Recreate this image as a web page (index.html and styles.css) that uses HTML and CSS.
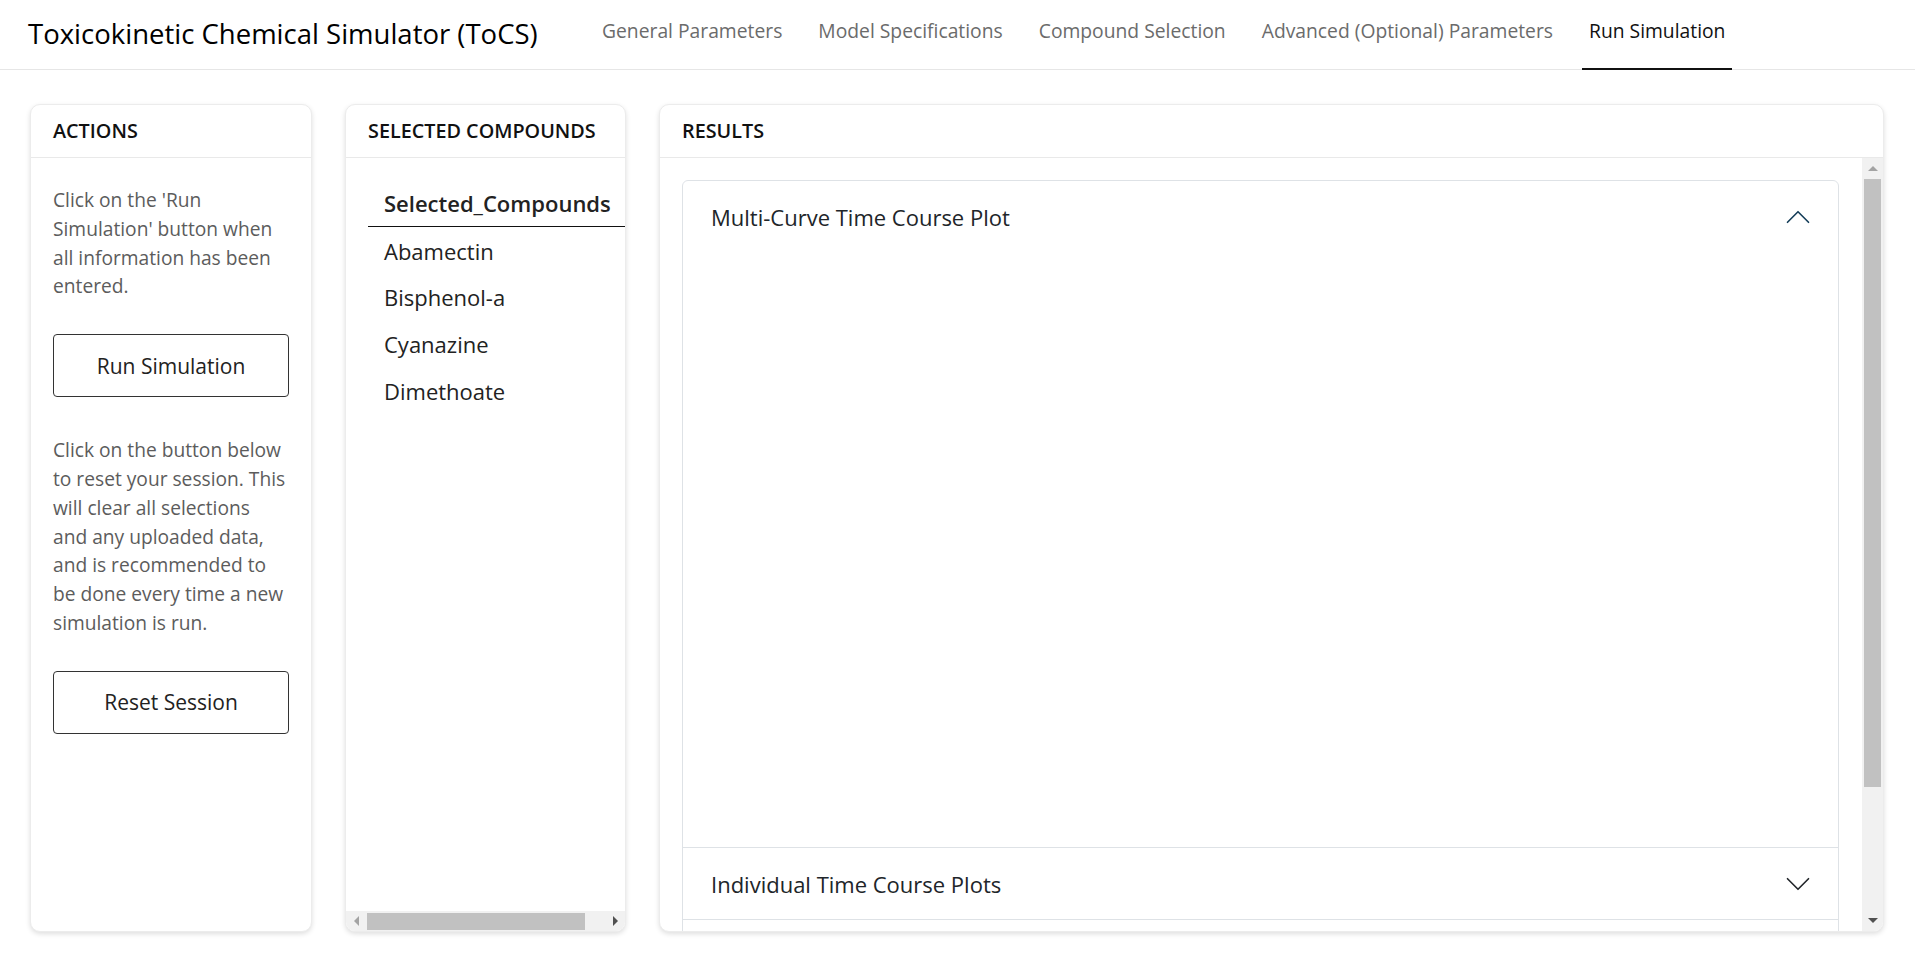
FILE: index.html
```html
<!DOCTYPE html>
<html lang="en">
<head>
<meta charset="utf-8">
<title>Toxicokinetic Chemical Simulator (ToCS)</title>
<link rel="stylesheet" href="styles.css">
</head>
<body>
<header class="topbar">
  <div class="brand">Toxicokinetic Chemical Simulator (ToCS)</div>
  <nav class="tabs">
    <a class="tab">General Parameters</a>
    <a class="tab">Model Specifications</a>
    <a class="tab">Compound Selection</a>
    <a class="tab">Advanced (Optional) Parameters</a>
    <a class="tab active">Run Simulation</a>
  </nav>
</header>
<main class="panels">
  <section class="card card-actions">
    <div class="card-header">Actions</div>
    <div class="actions-body">
      <p class="help">Click on the 'Run Simulation' button when all information has been entered.</p>
      <button class="btn btn-run" type="button">Run Simulation</button>
      <p class="help help-reset">Click on the button below to reset your session. This will clear all selections and any uploaded data, and is recommended to be done every time a new simulation is run.</p>
      <button class="btn btn-reset" type="button">Reset Session</button>
    </div>
  </section>

  <section class="card card-compounds">
    <div class="card-header">Selected Compounds</div>
    <div class="compounds-scroll">
      <table class="compounds-table">
        <thead><tr><th>Selected_Compounds</th></tr></thead>
        <tbody>
          <tr><td>Abamectin</td></tr>
          <tr><td>Bisphenol-a</td></tr>
          <tr><td>Cyanazine</td></tr>
          <tr><td>Dimethoate</td></tr>
        </tbody>
      </table>
    </div>
    <div class="hscroll">
      <span class="sb-btn"><span class="arrow arrow-left"></span></span>
      <span class="hthumb"></span>
      <span class="sb-btn sb-end"><span class="arrow arrow-right"></span></span>
    </div>
  </section>

  <section class="card card-results">
    <div class="card-header">Results</div>
    <div class="results-body">
      <div class="results-scroll">
        <div class="accordion">
          <div class="acc-item">
            <div class="acc-header open">
              <span class="acc-title">Multi-Curve Time Course Plot</span>
              <svg class="chev chev-up" viewBox="0 0 16 16" width="28" height="28"><path d="M2 5L8 11L14 5" fill="none" stroke="currentColor" stroke-width="0.95" stroke-linecap="round" stroke-linejoin="round"/></svg>
            </div>
            <div class="acc-body plot-area"></div>
          </div>
          <div class="acc-item">
            <div class="acc-header">
              <span class="acc-title">Individual Time Course Plots</span>
              <svg class="chev" viewBox="0 0 16 16" width="28" height="28"><path d="M2 5L8 11L14 5" fill="none" stroke="currentColor" stroke-width="0.95" stroke-linecap="round" stroke-linejoin="round"/></svg>
            </div>
          </div>
          <div class="acc-item">
            <div class="acc-header"></div>
          </div>
        </div>
      </div>
      <div class="vscroll">
        <span class="sb-btn-v"><span class="arrow arrow-up"></span></span>
        <span class="vthumb"></span>
        <span class="sb-btn-v sb-end-v"><span class="arrow arrow-down"></span></span>
      </div>
    </div>
  </section>
</main>
</body>
</html>
```

FILE: styles.css
```css
* { box-sizing: border-box; }
html, body { margin: 0; padding: 0; background: #fff; }
body {
  font-family: "Open Sans", "Liberation Sans", sans-serif;
  color: #212529;
  width: 1915px;
  height: 962px;
  overflow: hidden;
}

/* ---------- top bar ---------- */
.topbar {
  display: flex;
  height: 70px;
  border-bottom: 1px solid #e6e6e6;
}
.brand {
  flex: 0 0 595px;
  display: flex;
  align-items: center;
  padding: 0 0 3px 28px;
  font-size: 27.5px;
  color: #000;
  white-space: nowrap;
}
.tabs {
  display: flex;
  gap: 22px;
}
.tab {
  display: flex;
  align-items: center;
  padding: 0 7px 7px;
  margin-bottom: -1px;
  font-size: 19.3px;
  color: #6b6b6b;
  border-bottom: 2px solid transparent;
  white-space: nowrap;
  cursor: pointer;
}
.tab.active {
  color: #111;
  border-bottom-color: #111;
}

/* ---------- panels ---------- */
.panels {
  display: flex;
  gap: 33px;
  padding: 34px 31px 0 30px;
}
.card {
  height: 828px;
  background: #fff;
  border: 1px solid #ececec;
  border-radius: 10px;
  box-shadow: 0 2px 5px rgba(0, 0, 0, 0.13);
  display: flex;
  flex-direction: column;
  overflow: hidden;
}
.card-actions { flex: 0 0 282px; }
.card-compounds { flex: 0 0 281px; }
.card-results { flex: 1 1 auto; min-width: 0; }

.card-header {
  flex: none;
  height: 53px;
  display: flex;
  align-items: center;
  padding: 0 22px 1px;
  border-bottom: 1px solid #e9e9e9;
  font-size: 19.8px;
  font-weight: 600;
  text-transform: uppercase;
  color: #111;
  white-space: nowrap;
}

/* ---------- actions ---------- */
.actions-body {
  padding: 28px 22px 0;
}
.help {
  margin: 0;
  font-size: 19.2px;
  line-height: 28.8px;
  color: #5c5c5c;
}
.help-reset { margin-top: 39px; }
.btn {
  display: flex;
  align-items: center;
  justify-content: center;
  width: 100%;
  height: 63px;
  background: #fff;
  border: 1px solid #333;
  border-radius: 4px;
  font-family: inherit;
  font-size: 21px;
  color: #222;
  padding: 0;
}
.btn-run { margin-top: 33px; }
.btn-reset { margin-top: 33px; }

/* ---------- compounds ---------- */
.compounds-scroll {
  flex: 1 1 auto;
  min-height: 0;
  overflow: hidden;
  padding: 22px 0 0 22px;
}
.compounds-table {
  border-collapse: collapse;
  font-size: 22px;
  line-height: 32px;
  color: #222;
  white-space: nowrap;
}
.compounds-table th {
  text-align: left;
  font-weight: 600;
  padding: 7px 40px 7px 16px;
  border-bottom: 1px solid #111;
}
.compounds-table td {
  padding: 7.5px 16px 7.25px;
}

.hscroll {
  flex: none;
  height: 20px;
  background: #f1f1f1;
  display: flex;
  align-items: center;
}
.sb-btn {
  flex: none;
  width: 20px;
  height: 100%;
  display: flex;
  align-items: center;
  justify-content: center;
}
.sb-end { margin-left: auto; }
.hthumb {
  flex: none;
  width: 218px;
  height: 17px;
  margin-left: 1px;
  background: #c1c1c1;
}

.arrow { width: 0; height: 0; display: block; }
.arrow-left {
  border-top: 5px solid transparent;
  border-bottom: 5px solid transparent;
  border-right: 5px solid #a3a3a3;
}
.arrow-right {
  border-top: 5px solid transparent;
  border-bottom: 5px solid transparent;
  border-left: 5px solid #505050;
}
.arrow-up {
  border-left: 5px solid transparent;
  border-right: 5px solid transparent;
  border-bottom: 5px solid #a3a3a3;
}
.arrow-down {
  border-left: 5px solid transparent;
  border-right: 5px solid transparent;
  border-top: 5px solid #505050;
}

/* ---------- results ---------- */
.results-body {
  flex: 1 1 auto;
  min-height: 0;
  display: flex;
}
.results-scroll {
  flex: 1 1 auto;
  min-width: 0;
  overflow: hidden;
  padding: 22px 23px 0 22px;
}
.accordion {
  border: 1px solid #dee2e6;
  border-radius: 6px 6px 0 0;
}
.acc-item + .acc-item {
  border-top: 1px solid #dee2e6;
}
.acc-header {
  height: 71px;
  display: flex;
  align-items: center;
  justify-content: space-between;
  padding: 0 26px 0 28px;
  font-size: 22px;
  color: #212529;
}
.chev {
  flex: none;
  color: #212529;
}
.chev-up {
  transform: rotate(180deg);
  color: #163f5a;
}
.plot-area {
  height: 595px;
  background: #fff;
}

.vscroll {
  flex: none;
  width: 21px;
  background: #f1f1f1;
  display: flex;
  flex-direction: column;
  align-items: center;
}
.sb-btn-v {
  flex: none;
  width: 100%;
  height: 21px;
  display: flex;
  align-items: center;
  justify-content: center;
}
.sb-end-v { margin-top: auto; }
.vthumb {
  flex: none;
  width: 17px;
  height: 608px;
  background: #c1c1c1;
}
```
